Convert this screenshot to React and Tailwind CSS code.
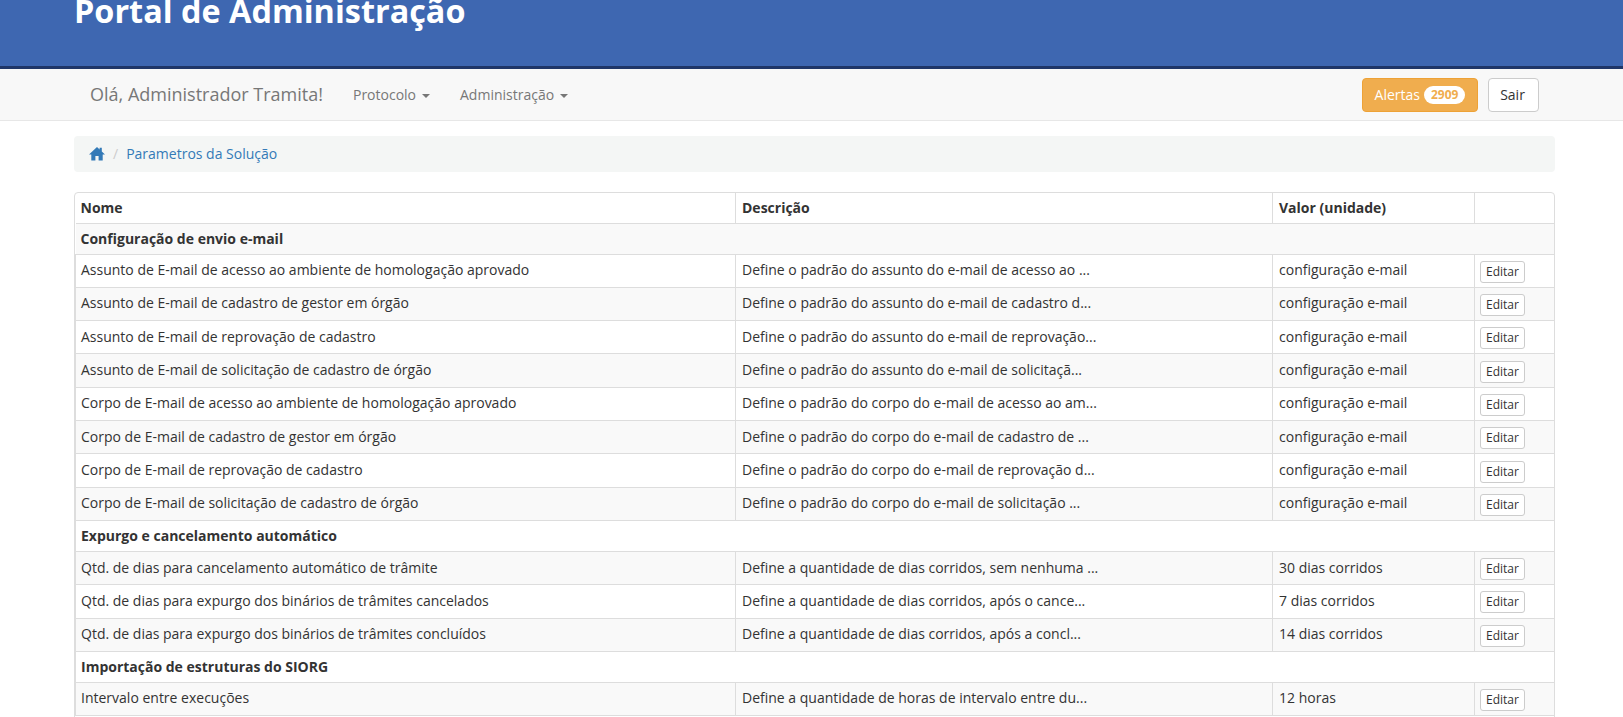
const emailRows = [
  ["Assunto de E-mail de acesso ao ambiente de homologação aprovado", "Define o padrão do assunto do e-mail de acesso ao ..."],
  ["Assunto de E-mail de cadastro de gestor em órgão", "Define o padrão do assunto do e-mail de cadastro d..."],
  ["Assunto de E-mail de reprovação de cadastro", "Define o padrão do assunto do e-mail de reprovação..."],
  ["Assunto de E-mail de solicitação de cadastro de órgão", "Define o padrão do assunto do e-mail de solicitaçã..."],
  ["Corpo de E-mail de acesso ao ambiente de homologação aprovado", "Define o padrão do corpo do e-mail de acesso ao am..."],
  ["Corpo de E-mail de cadastro de gestor em órgão", "Define o padrão do corpo do e-mail de cadastro de ..."],
  ["Corpo de E-mail de reprovação de cadastro", "Define o padrão do corpo do e-mail de reprovação d..."],
  ["Corpo de E-mail de solicitação de cadastro de órgão", "Define o padrão do corpo do e-mail de solicitação ..."],
].map((r) => [...r, "configuração e-mail"]);

const expurgoRows = [
  ["Qtd. de dias para cancelamento automático de trâmite", "Define a quantidade de dias corridos, sem nenhuma ...", "30 dias corridos"],
  ["Qtd. de dias para expurgo dos binários de trâmites cancelados", "Define a quantidade de dias corridos, após o cance...", "7 dias corridos"],
  ["Qtd. de dias para expurgo dos binários de trâmites concluídos", "Define a quantidade de dias corridos, após a concl...", "14 dias corridos"],
];

const siorgRows = [
  ["Intervalo entre execuções", "Define a quantidade de horas de intervalo entre du...", "12 horas"],
];

function Caret() {
  return <span className="ml-[6px] inline-block align-middle border-x-4 border-t-4 border-x-transparent border-t-[#777]" />;
}

function GroupRow({ title, first }) {
  return (
    <tr className={`odd:bg-[#f9f9f9] ${first ? "h-[31px]" : "h-[30.8px]"}`}>
      <td colSpan={4} className={`border border-r-0 border-[#ddd] pl-[5px] pr-[6px] font-bold text-[#333] ${first ? "border-l-0" : "pb-[1px]"}`}>{title}</td>
    </tr>
  );
}

function ParamRow({ row }) {
  return (
    <tr className="h-[33.33px] odd:bg-[#f9f9f9]">
      <td className="border border-[#ddd] pl-[5px] pr-[6px] pb-[2px] truncate">{row[0]}</td>
      <td className="border border-[#ddd] px-[6px] pb-[2px] truncate">{row[1]}</td>
      <td className="border border-[#ddd] px-[6px] pb-[2px] truncate">{row[2]}</td>
      <td className="border border-r-0 border-[#ddd] px-[5px] pt-[2px]">
        <button className="block h-[22px] w-[45px] rounded-[3px] border border-[#ccc] bg-white text-[12px] leading-[18px] text-[#333]">Editar</button>
      </td>
    </tr>
  );
}

export default function App() {
  return (
    <div className="h-[717px] overflow-hidden bg-white font-['Open_Sans',sans-serif] text-[14px] text-[#333]">
      <header className="h-[69px] overflow-hidden border-b-[3px] border-[#1f3668] bg-[#3e67b1] pl-[74px]">
        <h1 className="-mt-[11px] text-[32.4px] leading-[42px] font-bold text-white">Portal de Administração</h1>
      </header>

      <nav className="flex h-[52px] items-center border-b border-[#e7e7e7] bg-[#f8f8f8] pl-[90px] pr-[84px]">
        <span className="text-[18px] text-[#777]">Olá, Administrador Tramita!</span>
        <span className="ml-[30px] text-[#777]">Protocolo<Caret /></span>
        <span className="ml-[30px] text-[#777]">Administração<Caret /></span>
        <div className="ml-auto flex gap-[10px]">
          <button className="flex h-[34px] w-[116px] items-center justify-center gap-[4px] rounded border border-[#eea236] bg-[#f0ad4e] text-white">
            Alertas
            <span className="rounded-[10px] bg-white px-[7px] text-[12px] leading-[18px] font-bold text-[#f0ad4e]">2909</span>
          </button>
          <button className="h-[34px] w-[51px] rounded border border-[#ccc] bg-white pr-[2px] text-[#333]">Sair</button>
        </div>
      </nav>

      <div className="w-[1481px] ml-[74px]">
        <div className="mt-[15px] flex h-[36px] items-center rounded bg-[#f4f6f5] px-[15px] pb-[2px]">
          <svg viewBox="0 0 16 14" className="h-[15px] w-[16px] fill-[#337ab7]">
            <path d="M8 0.5 L10.6 3 V1.2 H12.8 V5.1 L16 8 H13.7 V14 H9.6 V9.4 H6.4 V14 H2.3 V8 H0 Z" />
          </svg>
          <span className="px-[8px] text-[#ccc]">/</span>
          <a className="text-[#337ab7]">Parametros da Solução</a>
        </div>

        <div className="mt-[20px] overflow-hidden rounded border border-[#ddd]">
          <table className="w-full table-fixed border-collapse">
            <colgroup>
              <col className="w-[660px]" />
              <col className="w-[537px]" />
              <col className="w-[202px]" />
              <col />
            </colgroup>
            <thead>
              <tr className="h-[30px] font-bold text-left">
                <th className="border border-l-0 border-t-0 border-[#ddd] pl-[5px] pr-[6px]">Nome</th>
                <th className="border border-t-0 border-[#ddd] px-[6px]">Descrição</th>
                <th className="border border-t-0 border-[#ddd] px-[6px]">Valor (unidade)</th>
                <th className="border border-r-0 border-t-0 border-[#ddd] px-[6px]"></th>
              </tr>
            </thead>
            <tbody>
              <GroupRow title="Configuração de envio e-mail" first />
              {emailRows.map((row) => <ParamRow key={row[0]} row={row} />)}
              <GroupRow title="Expurgo e cancelamento automático" />
              {expurgoRows.map((row) => <ParamRow key={row[0]} row={row} />)}
              <GroupRow title="Importação de estruturas do SIORG" />
              {siorgRows.map((row) => <ParamRow key={row[0]} row={row} />)}
              <tr className="h-[33px]"><td colSpan={4}></td></tr>
            </tbody>
          </table>
        </div>
      </div>
    </div>
  );
}
